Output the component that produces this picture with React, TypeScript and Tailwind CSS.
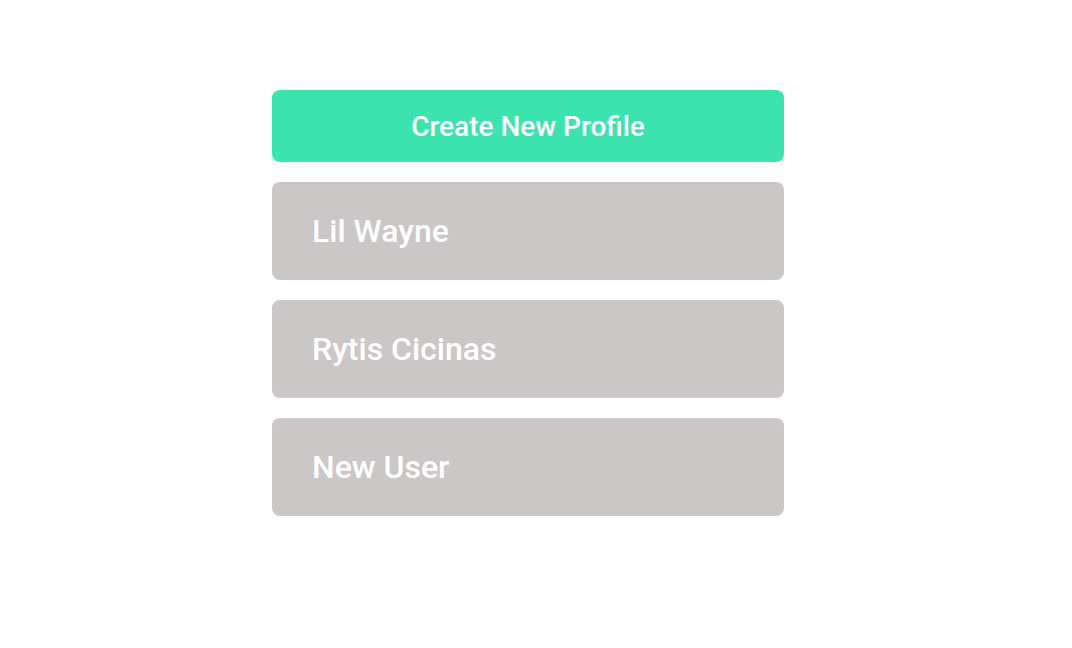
export default function App() {
  const profiles = ["Lil Wayne", "Rytis Cicinas", "New User"];

  return (
    <div className="min-h-screen bg-white font-['Roboto',sans-serif]">
      <div className="flex flex-col gap-5 pl-[272px] pt-[90px]">
        <button
          type="button"
          className="flex h-[72px] w-[512px] items-center justify-center rounded-lg bg-[#3ce3ae] pt-0.5 text-[28px] font-medium text-white"
        >
          Create New Profile
        </button>
        {profiles.map((name) => (
          <div
            key={name}
            className="flex h-[98px] w-[512px] items-center rounded-lg bg-[#cbc7c6] px-10 text-[32px] font-medium text-white"
          >
            {name}
          </div>
        ))}
      </div>
    </div>
  );
}
